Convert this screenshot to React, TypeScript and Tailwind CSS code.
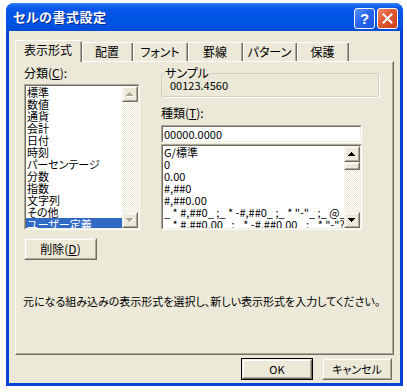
import React from "react";

const FONT = "font-['Noto_Sans_CJK_JP',sans-serif] [font-feature-settings:'palt']";

function Raised({ className = "", children }: { className?: string; children?: React.ReactNode }) {
  return (
    <div className={`border border-t-[#F1EFE2] border-l-[#F1EFE2] border-r-[#716F64] border-b-[#716F64] ${className}`}>
      <div className="w-full h-full border border-t-white border-l-white border-r-[#ACA899] border-b-[#ACA899] bg-[#ECE9D8] flex items-center justify-center">
        {children}
      </div>
    </div>
  );
}

function Sunken({ className = "", children }: { className?: string; children?: React.ReactNode }) {
  return (
    <div className={`border border-t-[#ACA899] border-l-[#ACA899] border-r-white border-b-white ${className}`}>
      <div className="w-full h-full border border-t-[#716F64] border-l-[#716F64] border-r-[#F1EFE2] border-b-[#F1EFE2] bg-white flex overflow-hidden">
        {children}
      </div>
    </div>
  );
}

function Arrow({ up, disabled }: { up: boolean; disabled?: boolean }) {
  const rows = [
    [3, 1],
    [2, 3],
    [1, 5],
    [0, 7],
  ];
  const rs = up ? rows : [...rows].reverse();
  return (
    <svg width="8" height="5" viewBox="0 0 8 5" shapeRendering="crispEdges">
      {disabled &&
        rs.map(([x, w], i) => <rect key={"s" + i} x={x + 1} y={i + 1} width={w} height={1} fill="#ffffff" />)}
      {rs.map(([x, w], i) => (
        <rect key={i} x={x} y={i} width={w} height={1} fill={disabled ? "#ACA899" : "#000000"} />
      ))}
    </svg>
  );
}

const checker =
  "bg-[repeating-conic-gradient(#ffffff_0%_25%,#ECE9D8_0%_50%)] bg-[length:2px_2px]";

function ScrollBar({ disabled, thumb }: { disabled?: boolean; thumb?: boolean }) {
  return (
    <div className="w-[16px] h-full flex flex-col shrink-0">
      <Raised className="w-[16px] h-[16px] shrink-0">
        <Arrow up disabled={disabled} />
      </Raised>
      <div className={`flex-1 flex flex-col ${checker}`}>
        {thumb && <Raised className="w-[16px] h-[8px] shrink-0" />}
      </div>
      <Raised className="w-[16px] h-[16px] shrink-0">
        <Arrow up={false} disabled={disabled} />
      </Raised>
    </div>
  );
}

const categories = [
  "標準",
  "数値",
  "通貨",
  "会計",
  "日付",
  "時刻",
  "パーセンテージ",
  "分数",
  "指数",
  "文字列",
  "その他",
  "ユーザー定義",
];

const formats = [
  "G/標準",
  "0",
  "0.00",
  "#,##0",
  "#,##0.00",
  '_ * #,##0_ ;_ * -#,##0_ ;_ * "-"_ ;_ @_',
  '_ * #,##0.00_ ;_ * -#,##0.00_ ;_ * "-"??_ ;_ @_',
  '_ ¥* #,##0_ ;_ ¥* -#,##0_ ;_ ¥* "-"_ ;_ @_',
];

const tabs = [
  { label: "配置", w: "w-[51px]" },
  { label: "フォント", w: "w-[55px]" },
  { label: "罫線", w: "w-[55px]" },
  { label: "パターン", w: "w-[54px]" },
  { label: "保護", w: "w-[52px]" },
];

export default function App() {
  return (
    <div className={`w-[407px] h-[392px] bg-white pt-[3px] pl-[6px] text-[11px] text-black ${FONT}`}>
      <div className="w-[397px] h-[383px] flex flex-col rounded-t-[8px] overflow-hidden bg-[#0842D8]">
        {/* Title bar */}
        <div className="h-[28px] shrink-0 flex items-start pl-[7px] pr-[5px] bg-[linear-gradient(to_bottom,#3B8CF8_0px,#1C6CF2_2px,#0858EC_5px,#0054E3_14px,#0054E3_22px,#004BD6_28px)]">
          <div className="mt-[6px] text-[13px] leading-[16px] font-bold text-white [text-shadow:1px_1px_0_#0A2A8A] tracking-[0.5px]">
            セルの書式設定
          </div>
          <div className="ml-auto mt-[5px] flex gap-[2px]">
            <div className="w-[21px] h-[21px] rounded-[3px] border border-white bg-[linear-gradient(135deg,#5A96FA_0%,#2A66EE_45%,#1A50DA_100%)] flex items-center justify-center">
              <span className="text-white font-bold text-[15px] leading-[15px] font-['Liberation_Sans',sans-serif]">?</span>
            </div>
            <div className="w-[21px] h-[21px] rounded-[3px] border border-white bg-[linear-gradient(135deg,#EE8A66_0%,#E0582F_45%,#C8401E_100%)] flex items-center justify-center">
              <svg width="11" height="11" viewBox="0 0 11 11">
                <path d="M1.5 1.5 L9.5 9.5 M9.5 1.5 L1.5 9.5" stroke="#ffffff" strokeWidth="2" strokeLinecap="square" />
              </svg>
            </div>
          </div>
        </div>

        {/* Body */}
        <div className="flex-1 flex flex-col px-[3px] pb-[3px]">
          <div className="flex-1 bg-[#ECE9D8] flex flex-col pl-[6px] pt-[9px]">
            {/* Tabs */}
            <div className="h-[21px] flex items-end">
              <div className="relative z-10 w-[67px] h-[22px] -mb-[1px] bg-[#ECE9D8] border-l border-t border-white rounded-tl-[2px] flex">
                <div className="flex-1 flex items-center justify-center pb-[3px] leading-[12px] text-[12px]">表示形式</div>
                <div className="w-[2px] h-full border-l border-[#ACA899] border-r border-r-[#716F64] rounded-tr-[2px]" />
              </div>
              {tabs.map((t) => (
                <div
                  key={t.label}
                  className={`${t.w} h-[19px] bg-[#ECE9D8] border-t border-white flex`}
                >
                  <div className="w-[1px] h-full bg-white" />
                  <div className="flex-1 flex items-center justify-center leading-[12px] pb-[1px] text-[12px]">{t.label}</div>
                  <div className="w-[2px] h-full border-l border-[#ACA899] border-r border-r-[#716F64]" />
                </div>
              ))}
            </div>

            {/* Panel */}
            <div className="w-[379px] h-[294px] border-l border-t border-white border-r border-r-[#716F64] border-b border-b-[#716F64] flex flex-col">
              <div className="flex-1 border-r border-r-[#ACA899] border-b border-b-[#ACA899] flex flex-col pl-[8px] pt-[5px]">
                <div className="flex">
                  {/* Left column */}
                  <div className="w-[116px] flex flex-col">
                    <div className="h-[17px] leading-[12px] text-[12px]">
                      分類(<span className="underline">C</span>):
                    </div>
                    <Sunken className="w-[116px] h-[146px]">
                      <div className="flex-1 flex flex-col">
                        {categories.map((c, i) => (
                          <div
                            key={c}
                            className={`h-[12px] shrink-0 leading-[12px] pl-[1px] whitespace-nowrap ${
                              i === categories.length - 1 ? "bg-[#316AC5] text-white" : ""
                            }`}
                          >
                            {c}
                          </div>
                        ))}
                      </div>
                      <ScrollBar disabled />
                    </Sunken>
                    <Raised className="mt-[8px] w-[73px] h-[22px]">
                      <span className="leading-[12px] text-[12px]">
                        削除(<span className="underline">D</span>)
                      </span>
                    </Raised>
                  </div>

                  {/* Right column */}
                  <div className="ml-[21px] w-[218px] flex flex-col">
                    <fieldset className="w-[218px] h-[30px] border border-[#D0D0BF] rounded-[2px] px-[2px] shadow-[1px_1px_0_#ffffff]">
                      <legend className="px-[1px] leading-[12px] text-[12px]">サンプル</legend>
                      <div className="pl-[6px] leading-[12px]">00123.4560</div>
                    </fieldset>
                    <div className="mt-[10px] h-[12px] leading-[12px] text-[12px]">
                      種類(<span className="underline">T</span>):
                    </div>
                    <Sunken className="mt-[6px] w-[201px] h-[18px]">
                      <div className="pl-[1px] leading-[14px]">00000.0000</div>
                    </Sunken>
                    <Sunken className="mt-[1px] w-[201px] h-[86px]">
                      <div className="flex-1 flex flex-col overflow-hidden">
                        {formats.map((f) => (
                          <div key={f} className="h-[12px] shrink-0 leading-[12px] pl-[1px] whitespace-pre">
                            {f}
                          </div>
                        ))}
                      </div>
                      <ScrollBar thumb />
                    </Sunken>
                  </div>
                </div>

                <div className="mt-[35px] -ml-[1px] leading-[12px] whitespace-nowrap">
                  元になる組み込みの表示形式を選択し、新しい表示形式を入力してください。
                </div>
              </div>
            </div>

            {/* Buttons */}
            <div className="mt-[3px] flex pl-[226px] gap-[9px]">
              <div className="border border-black">
                <Raised className="w-[70px] h-[20px]">
                  <span className="leading-[12px]">OK</span>
                </Raised>
              </div>
              <Raised className="w-[70px] h-[22px]">
                <span className="leading-[12px]">キャンセル</span>
              </Raised>
            </div>
          </div>
        </div>
      </div>
    </div>
  );
}
